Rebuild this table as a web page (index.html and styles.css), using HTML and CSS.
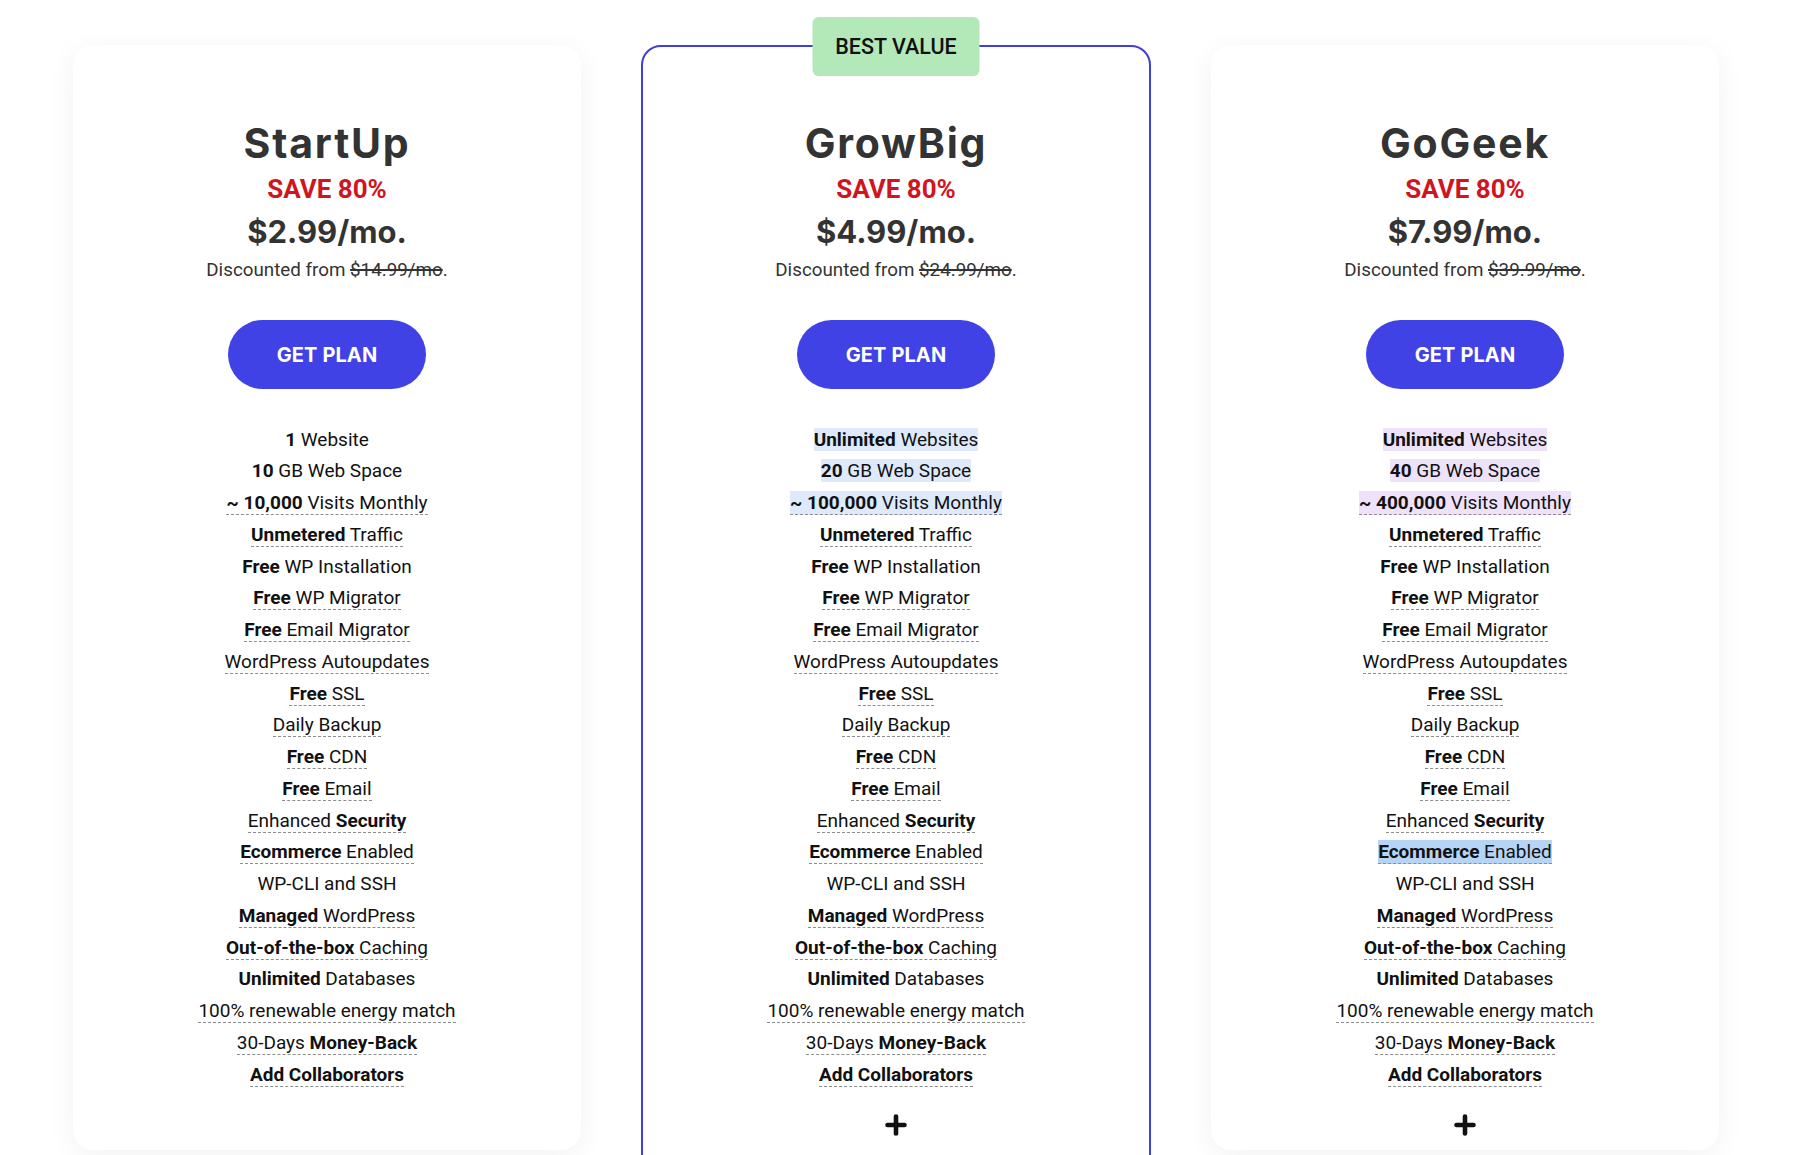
FILE: index.html
```html
<!DOCTYPE html>
<html lang="en">
<head>
<meta charset="utf-8">
<title>Hosting Plans</title>
<link rel="stylesheet" href="styles.css">
</head>
<body>
<main class="pricing">
  <section class="card">
    <h2 class="plan-name">StartUp</h2>
    <div class="save">SAVE 80%</div>
    <div class="price">$2.99/mo.</div>
    <div class="from">Discounted from <s>$14.99/mo</s>.</div>
    <a class="btn" href="#">GET PLAN</a>
    <ul class="features">
      <li><span><b>1</b> Website</span></li>
      <li><span><b>10</b> GB Web Space</span></li>
      <li><span class="u"><b>~ 10,000</b> Visits Monthly</span></li>
      <li><span class="u"><b>Unmetered</b> Traffic</span></li>
      <li><span><b>Free</b> WP Installation</span></li>
      <li><span class="u"><b>Free</b> WP Migrator</span></li>
      <li><span class="u"><b>Free</b> Email Migrator</span></li>
      <li><span class="u">WordPress Autoupdates</span></li>
      <li><span class="u"><b>Free</b> SSL</span></li>
      <li><span class="u">Daily Backup</span></li>
      <li><span class="u"><b>Free</b> CDN</span></li>
      <li><span class="u"><b>Free</b> Email</span></li>
      <li><span class="u">Enhanced <b>Security</b></span></li>
      <li><span class="u"><b>Ecommerce</b> Enabled</span></li>
      <li><span>WP-CLI and SSH</span></li>
      <li><span class="u"><b>Managed</b> WordPress</span></li>
      <li><span class="u"><b>Out-of-the-box</b> Caching</span></li>
      <li><span><b>Unlimited</b> Databases</span></li>
      <li><span class="u">100% renewable energy match</span></li>
      <li><span class="u">30-Days <b>Money-Back</b></span></li>
      <li><span class="u"><b>Add Collaborators</b></span></li>
    </ul>
  </section>

  <section class="card featured">
    <div class="badge">BEST VALUE</div>
    <h2 class="plan-name">GrowBig</h2>
    <div class="save">SAVE 80%</div>
    <div class="price">$4.99/mo.</div>
    <div class="from">Discounted from <s>$24.99/mo</s>.</div>
    <a class="btn" href="#">GET PLAN</a>
    <ul class="features">
      <li><span class="hl-blue"><b>Unlimited</b> Websites</span></li>
      <li><span class="hl-blue"><b>20</b> GB Web Space</span></li>
      <li><span class="u hl-blue"><b>~ 100,000</b> Visits Monthly</span></li>
      <li><span class="u"><b>Unmetered</b> Traffic</span></li>
      <li><span><b>Free</b> WP Installation</span></li>
      <li><span class="u"><b>Free</b> WP Migrator</span></li>
      <li><span class="u"><b>Free</b> Email Migrator</span></li>
      <li><span class="u">WordPress Autoupdates</span></li>
      <li><span class="u"><b>Free</b> SSL</span></li>
      <li><span class="u">Daily Backup</span></li>
      <li><span class="u"><b>Free</b> CDN</span></li>
      <li><span class="u"><b>Free</b> Email</span></li>
      <li><span class="u">Enhanced <b>Security</b></span></li>
      <li><span class="u"><b>Ecommerce</b> Enabled</span></li>
      <li><span>WP-CLI and SSH</span></li>
      <li><span class="u"><b>Managed</b> WordPress</span></li>
      <li><span class="u"><b>Out-of-the-box</b> Caching</span></li>
      <li><span><b>Unlimited</b> Databases</span></li>
      <li><span class="u">100% renewable energy match</span></li>
      <li><span class="u">30-Days <b>Money-Back</b></span></li>
      <li><span class="u"><b>Add Collaborators</b></span></li>
    </ul>
    <div class="more" aria-label="more">
      <svg width="22" height="22" viewBox="0 0 22 22"><path d="M11 2.5v17M2.5 11h17" stroke="#111" stroke-width="4.6" stroke-linecap="round" fill="none"/></svg>
    </div>
  </section>

  <section class="card">
    <h2 class="plan-name">GoGeek</h2>
    <div class="save">SAVE 80%</div>
    <div class="price">$7.99/mo.</div>
    <div class="from">Discounted from <s>$39.99/mo</s>.</div>
    <a class="btn" href="#">GET PLAN</a>
    <ul class="features">
      <li><span class="hl-lav"><b>Unlimited</b> Websites</span></li>
      <li><span class="hl-lav"><b>40</b> GB Web Space</span></li>
      <li><span class="u hl-lav"><b>~ 400,000</b> Visits Monthly</span></li>
      <li><span class="u"><b>Unmetered</b> Traffic</span></li>
      <li><span><b>Free</b> WP Installation</span></li>
      <li><span class="u"><b>Free</b> WP Migrator</span></li>
      <li><span class="u"><b>Free</b> Email Migrator</span></li>
      <li><span class="u">WordPress Autoupdates</span></li>
      <li><span class="u"><b>Free</b> SSL</span></li>
      <li><span class="u">Daily Backup</span></li>
      <li><span class="u"><b>Free</b> CDN</span></li>
      <li><span class="u"><b>Free</b> Email</span></li>
      <li><span class="u">Enhanced <b>Security</b></span></li>
      <li><span class="u hl-sel"><b>Ecommerce</b> Enabled</span></li>
      <li><span>WP-CLI and SSH</span></li>
      <li><span class="u"><b>Managed</b> WordPress</span></li>
      <li><span class="u"><b>Out-of-the-box</b> Caching</span></li>
      <li><span><b>Unlimited</b> Databases</span></li>
      <li><span class="u">100% renewable energy match</span></li>
      <li><span class="u">30-Days <b>Money-Back</b></span></li>
      <li><span class="u"><b>Add Collaborators</b></span></li>
    </ul>
    <div class="more" aria-label="more">
      <svg width="22" height="22" viewBox="0 0 22 22"><path d="M11 2.5v17M2.5 11h17" stroke="#111" stroke-width="4.6" stroke-linecap="round" fill="none"/></svg>
    </div>
  </section>
</main>
</body>
</html>
```

FILE: styles.css
```css
html, body {
  margin: 0;
  padding: 0;
  height: 1155px;
  overflow: hidden;
  background: #ffffff;
}

body {
  font-family: Roboto, "Liberation Sans", Arial, sans-serif;
  color: #111;
}

.pricing {
  display: flex;
  align-items: flex-start;
  gap: 60px;
  padding: 45px 0 0 73px;
}

.card {
  box-sizing: border-box;
  width: 508px;
  height: 1105px;
  border: 2px solid transparent;
  border-radius: 20px;
  background: #fff;
  box-shadow: 0 6px 28px rgba(0, 0, 0, 0.055);
  display: flex;
  flex-direction: column;
  align-items: center;
  padding-top: 71px;
  position: relative;
}

.card.featured {
  width: 510px;
  height: 1200px;
  border-color: #3f3fd9;
  box-shadow: none;
}

.badge {
  position: absolute;
  top: -30px;
  left: 50%;
  transform: translateX(-50%);
  width: 167px;
  height: 59px;
  border-radius: 6px;
  background: #b3e9b9;
  color: #111;
  font-size: 21.5px;
  font-weight: 500;
  line-height: 59px;
  text-align: center;
}

.plan-name {
  margin: 0;
  font-family: Inter, "Open Sans", sans-serif;
  font-weight: 700;
  font-size: 41px;
  line-height: 50px;
  color: #333;
  letter-spacing: 1.8px;
}

.save {
  font-size: 26px;
  font-weight: 700;
  line-height: 42px;
  margin-bottom: 1px;
  color: #d0151f;
}

.price {
  font-family: Inter, "Open Sans", sans-serif;
  font-weight: 700;
  font-size: 31px;
  line-height: 42px;
  color: #333;
}

.from {
  font-size: 18.8px;
  line-height: 33px;
  margin-top: 1px;
  margin-bottom: -1px;
  color: #333;
}

.from s {
  text-decoration-thickness: 1.5px;
}

.btn {
  margin-top: 34px;
  width: 198px;
  height: 69px;
  border-radius: 35px;
  background: #4042e6;
  color: #fff;
  text-decoration: none;
  font-family: Inter, "Open Sans", sans-serif;
  font-weight: 700;
  font-size: 20px;
  letter-spacing: 0.1px;
  display: flex;
  align-items: center;
  justify-content: center;
}

.features {
  list-style: none;
  margin: 34.5px 0 0;
  padding: 0;
  text-align: center;
  font-size: 19px;
  line-height: 31.75px;
  color: #111;
}

.features b {
  font-weight: 700;
}

.features .u {
  border-bottom: 1px dashed #8d8d8d;
}

.hl-blue {
  background: #deeafb;
}

.hl-lav {
  background: #eee2fb;
}

.hl-sel {
  background: #b5d4f6;
}

.more {
  margin-top: 23.5px;
  width: 22px;
  height: 22px;
  display: flex;
}
```
